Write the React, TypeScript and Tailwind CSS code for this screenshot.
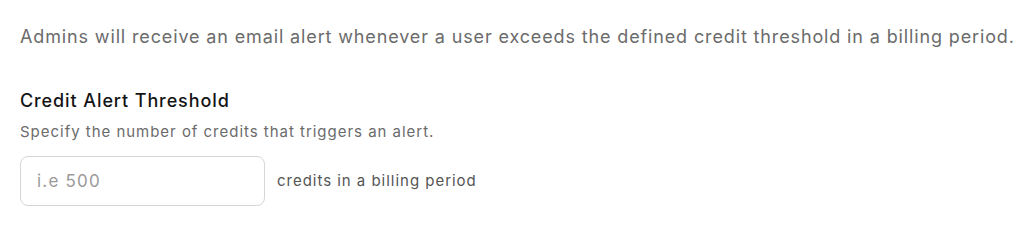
export default function App() {
  return (
    <div className="min-h-[231px] bg-white px-5 pt-[24px] font-['Inter',sans-serif]">
      <p className="whitespace-nowrap text-[18px] leading-[26px] tracking-[0.048em] text-[#6b6b6b]">
        Admins will receive an email alert whenever a user exceeds the defined credit threshold in a billing period.
      </p>
      <div className="mt-[39px]">
        <h3 className="text-[18px] leading-[24px] tracking-[0.05em] font-medium text-[#141414]">Credit Alert Threshold</h3>
        <p className="mt-[9px] text-[15px] leading-[20px] tracking-[0.065em] text-[#6b6b6b]">
          Specify the number of credits that triggers an alert.
        </p>
        <div className="mt-[14px] flex items-center gap-3">
          <input
            type="text"
            placeholder="i.e 500"
            className="h-[50px] w-[245px] rounded-lg border border-[#d6d6d6] px-4 text-[17px] tracking-[0.07em] text-[#333] placeholder:text-[#9a9a9a] outline-none"
          />
          <span className="text-[15px] tracking-[0.065em] text-[#555]">credits in a billing period</span>
        </div>
      </div>
    </div>
  );
}
